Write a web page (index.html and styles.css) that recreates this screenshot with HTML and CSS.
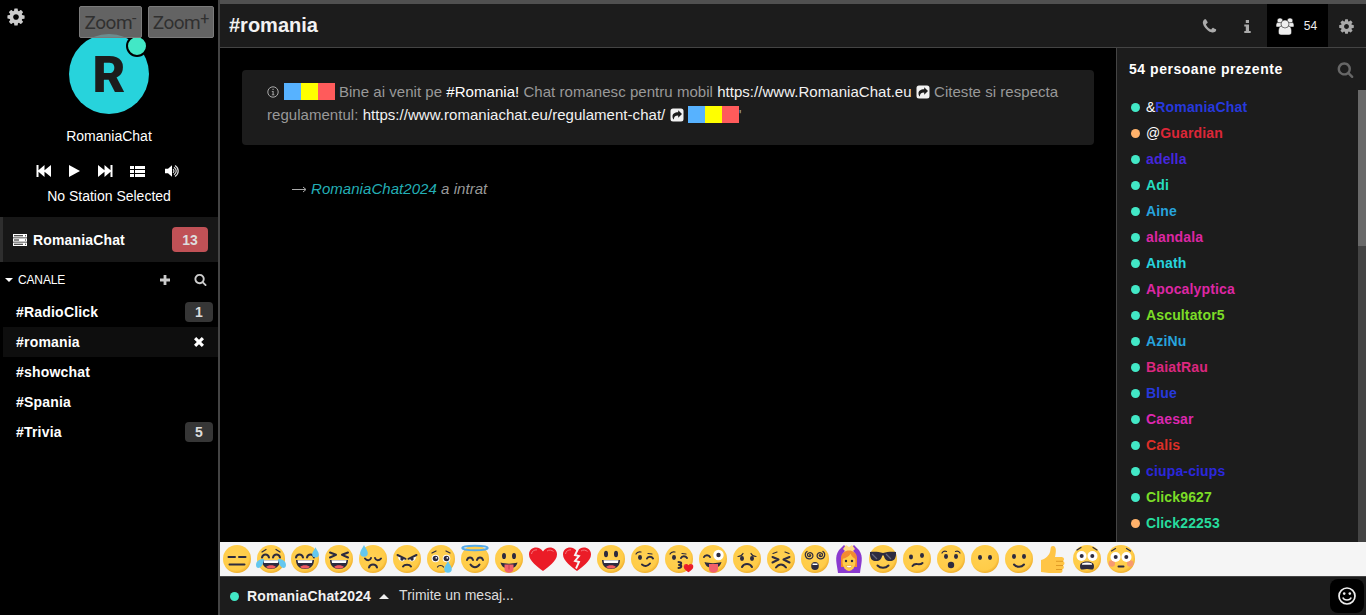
FILE: index.html
```html
<!DOCTYPE html>
<html lang="ro">
<head>
<meta charset="utf-8">
<title>#romania</title>
<link rel="stylesheet" href="styles.css">
</head>
<body>
<svg class="defs" aria-hidden="true">
  <defs>
    <radialGradient id="skin" cx="45%" cy="42%" r="58%"><stop offset="0" stop-color="#ffd153"/><stop offset=".82" stop-color="#ffcc48"/><stop offset="1" stop-color="#f0b02e"/></radialGradient>
  </defs>
  <symbol id="cog" viewBox="0 0 1792 1792"><path d="M1152 896q0-106-75-181t-181-75-181 75-75 181 75 181 181 75 181-75 75-181zm512-109v222q0 12-8 23t-20 13l-185 28q-19 54-39 91 35 50 107 138 10 12 10 25t-9 23q-27 37-99 108t-94 71q-12 0-26-9l-138-108q-44 23-91 38-16 136-29 186-7 28-36 28h-222q-14 0-24.500-8.500t-11.500-21.500l-28-184q-49-16-90-37l-141 107q-10 9-25 9-14 0-25-11-126-114-165-168-7-10-7-23 0-12 8-23 15-21 51-66.500t54-70.500q-27-50-41-99l-183-27q-13-2-21-12.500t-8-23.500v-222q0-12 8-23t19-13l186-28q14-46 39-92-40-57-107-138-10-12-10-24 0-10 9-23 26-36 98.500-107.500t94.500-71.500q13 0 26 10l138 107q44-23 91-38 16-136 29-186 7-28 36-28h222q14 0 24.500 8.500t11.500 21.500l28 184q49 16 90 37l142-107q9-9 24-9 13 0 25 10 129 119 165 170 7 8 7 22 0 12-8 23-15 21-51 66.500t-54 70.500q26 50 41 98l183 28q13 2 21 12.500t8 23.500z"/></symbol>
  <symbol id="search" viewBox="0 0 1792 1792"><path d="M1216 832q0-185-131.500-316.500t-316.500-131.500-316.500 131.500-131.500 316.500 131.500 316.500 316.500 131.500 316.500-131.500 131.500-316.500zm512 832q0 52-38 90t-90 38q-54 0-90-38l-343-342q-179 124-399 124-143 0-273.500-55.500t-225-150-150-225-55.500-273.500 55.500-273.500 150-225 225-150 273.500-55.500 273.500 55.500 225 150 150 225 55.500 273.500q0 220-124 399l343 343q37 37 37 90z"/></symbol>
  <symbol id="phone" viewBox="0 0 1792 1792"><path d="M1600 1240q0 27-10 70.500t-21 68.500q-21 50-122 106-94 51-186 51-27 0-53-3.500t-57.500-12.500-47-14.500-55.500-20.500-49-18q-98-35-175-83-127-79-264-216t-216-264q-48-77-83-175-3-9-18-49t-20.500-55.500-14.500-47-12.500-57.500-3.500-53q0-92 51-186 56-101 106-122 25-11 68.500-21t70.500-10q14 0 21 3 18 6 53 76 11 19 30 54t35 63.500 31 53.500q3 4 17.500 25t21.500 35.500 7 28.500q0 20-28.500 50t-62 55-62 53-28.500 46q0 9 5 22.500t8.500 20.500 14 24 11.500 19q76 137 174 235t235 174q2 1 19 11.500t24 14 20.500 8.500 22.500 5q18 0 46-28.500t53-62 55-62 50-28.500q14 0 28.500 7t35.500 21.500 25 17.500q25 15 53.500 31t63.500 35 54 30q70 35 76 53 3 7 3 21z"/></symbol>
  <symbol id="share" viewBox="0 0 14 14"><path fill-rule="evenodd" d="M3 .5h8a2.500 2.500 0 0 1 2.500 2.500v8A2.500 2.500 0 0 1 11 13.500H3A2.500 2.500 0 0 1 .5 11V3A2.500 2.500 0 0 1 3 .5zm5.200 1.800v2C4.500 4.300 2.400 6 2.500 8.500c0 1.300.5 2.500 1.300 3.100C4 8.800 5 7.500 8.200 7.500v2.200L12 6z"/></symbol>
  <symbol id="face" viewBox="0 0 28 28"><circle cx="14" cy="14" r="14" fill="url(#skin)"/></symbol>
  <symbol id="laugh" viewBox="0 0 28 28"><path d="M5 15h18c0 6-4 9-9 9s-9-3-9-9z" fill="#2d2b3f"/><path d="M6.500 15.300h15l-.6 2.700H7.100z" fill="#fff"/><path d="M9 22c2-2.500 8-2.500 10 0-3 2-7 2-10 0z" fill="#f15a61"/></symbol>
  <symbol id="arcs" viewBox="0 0 28 28"><path d="M5 12.500c1-4 6-4 7 0M16 12.500c1-4 6-4 7 0" class="ln"/></symbol>
  <symbol id="dots" viewBox="0 0 28 28"><ellipse cx="9" cy="11.500" rx="2" ry="2.400" fill="#2d2b3f"/><ellipse cx="19" cy="11.500" rx="2" ry="2.400" fill="#2d2b3f"/></symbol>
  <symbol id="bigeyes" viewBox="0 0 28 28"><circle cx="8.500" cy="12" r="5" fill="#fff"/><circle cx="19.500" cy="12" r="5" fill="#fff"/><circle cx="8.700" cy="12" r="2" fill="#2d2b3f"/><circle cx="19.300" cy="12" r="2" fill="#2d2b3f"/></symbol>
  <symbol id="drop" viewBox="0 0 8 12"><path d="M4 0c1 3 3.800 5 3.800 8a3.800 3.800 0 0 1-7.600 0C.2 5 3 3 4 0z" fill="#64c7ef"/></symbol>
  <symbol id="heart" viewBox="0 0 28 28"><path d="M14 26C9 22 0 16 0 9.500 0 2 10 0 14 6.500 18 0 28 2 28 9.500 28 16 19 22 14 26z" fill="#eb1c27"/><path d="M2.500 9C3 6 5 4.800 8 4.800M18 6c2-1.500 5-1 6.500.5" fill="none" stroke="#f5757c" stroke-width="1"/></symbol>
</svg>

<div class="app">
  <aside class="sidebar">
    <section class="profile">
      <svg class="profile-cog"><use href="#cog"/></svg>
      <div class="avatar">R<span class="avatar-status"></span></div>
      <div class="zoom"><button class="zoom-btn zoom-out">Zoom<sup>-</sup></button><button class="zoom-btn">Zoom<sup>+</sup></button></div>
      <div class="profile-name">RomaniaChat</div>
      <div class="player">
        <svg width="16" height="12" viewBox="0 0 16 12"><path d="M.5 0h2v5.300L8.500 0v5.300L15 0v12L8.500 6.700V12L2.500 6.700V12h-2z"/></svg>
        <svg class="play" width="11" height="12" viewBox="0 0 11 12"><path d="M0 0l11 6-11 6z"/></svg>
        <svg class="next" width="16" height="12" viewBox="0 0 16 12"><path d="M15.500 0h-2v5.300L7.500 0v5.300L1 0v12l6.500-5.300V12l6-5.300V12h2z"/></svg>
        <svg class="stations" width="15" height="11" viewBox="0 0 15 11"><path d="M0 0h4v3H0zM5 0h10v3H5zM0 4h4v3H0zM5 4h10v3H5zM0 8h4v3H0zM5 8h10v3H5z"/></svg>
        <svg class="volume" width="14" height="12" viewBox="0 0 14 12"><path d="M0 3.800h3L7 .2v11.600L3 8.200H0z"/><path d="M8 4.200c1.300 1 1.300 2.600 0 3.600M9 2.300c3 2 3 5.400 0 7.400M10 .6c4.300 2.700 4.300 8.100 0 10.800" fill="none" stroke="#ddd" stroke-width="1.200"/></svg>
      </div>
      <div class="station">No Station Selected</div>
    </section>
    <div class="network">
      <svg width="14" height="12" viewBox="0 0 14 12"><path fill-rule="evenodd" d="M0 0h14v3.400H0zM0 4.300h14v3.400H0zM0 8.600h14V12H0zM1 1.200v1h9v-1zM1 5.500v1h5v-1zM1 9.800v1h9v-1zM12 1.200v1h1v-1zM12 5.500v1h1v-1zM12 9.800v1h1v-1z"/></svg>
      <span class="network-name">RomaniaChat</span><span class="badge badge-alert">13</span>
    </div>
    <div class="channels-head">
      <span class="caret-down"></span><span class="channels-title">CANALE</span>
      <svg class="plus" width="10" height="10" viewBox="0 0 10 10"><path d="M3.600 0h2.800v3.600H10v2.800H6.400V10H3.600V6.400H0V3.600h3.600z"/></svg>
      <svg class="find" width="13" height="13"><use href="#search"/></svg>
    </div>
    <nav class="channels">
      <div class="channel"><span>#RadioClick</span><span class="badge">1</span></div>
      <div class="channel channel-active"><span>#romania</span><svg class="close" width="10" height="10" viewBox="0 0 10 10"><path d="M0 2.200L2.200 0 5 2.800 7.800 0 10 2.200 7.200 5 10 7.800 7.800 10 5 7.200 2.200 10 0 7.800 2.800 5z"/></svg></div>
      <div class="channel"><span>#showchat</span></div>
      <div class="channel"><span>#Spania</span></div>
      <div class="channel"><span>#Trivia</span><span class="badge">5</span></div>
    </nav>
  </aside>

  <main class="main">
    <header class="header">
      <h1 class="title">#romania</h1>
      <span class="tool tool-phone"><svg width="17" height="17"><use href="#phone"/></svg></span>
      <span class="tool tool-info"><svg width="7" height="13" viewBox="0 0 7 13"><path d="M1.800 0h3.200v3H1.800zM.3 4.500H5V11h1.700v2H.3v-2h1.500V6.500H.3z"/></svg></span>
      <span class="tool tool-users"><svg width="18" height="17" viewBox="0 0 18 17"><g stroke="#000" stroke-width=".5"><circle cx="4" cy="2.800" r="2.800"/><circle cx="14" cy="2.800" r="2.800"/><path d="M0 8c0-3 1-3.400 2-3.400h4V9H1.500C.5 9 0 8.800 0 8zM18 8c0-3-1-3.400-2-3.400h-4V9h4.500c1 0 1.500-.2 1.500-1z"/><path d="M2.400 14c0-4.500 1.600-6 3.400-6h6.400c1.800 0 3.400 1.500 3.400 6 0 2-1 3-2.600 3H5c-1.600 0-2.600-1-2.600-3z"/><circle cx="9" cy="6" r="4"/></g></svg><span>54</span></span>
      <span class="tool tool-cog"><svg width="17" height="17"><use href="#cog"/></svg></span>
    </header>
    <div class="body">
      <section class="messages">
        <div class="topic"><svg class="topic-info" width="12" height="12" viewBox="0 0 12 12"><circle cx="6" cy="6" r="5.200" fill="none" stroke="#aaa"/><path d="M5.500 2.700h1.100v1.200H5.500zM4.800 5h1.800v3.500h.8v.8H4.800v-.8h.8V5.800h-.8z" fill="#aaa"/></svg> <span class="flag"></span> Bine ai venit pe <b>#Romania!</b> Chat romanesc pentru mobil <a>https://www.RomaniaChat.eu <svg class="ext"><use href="#share"/></svg></a> Citeste si respecta<br>regulamentul: <a>https://www.romaniachat.eu/regulament-chat/ <svg class="ext"><use href="#share"/></svg></a> <span class="flag"></span><span class="tick">'</span></div>
        <div class="join"><svg width="15" height="8" viewBox="0 0 15 8"><path d="M0 4.500h13.500M11 2l3 2.500L11 7" fill="none" stroke="#aaa"/></svg><span class="join-nick">RomaniaChat2024</span> a intrat</div>
      </section>
      <aside class="people">
        <div class="people-head"><span>54 persoane prezente</span><svg width="17" height="17"><use href="#search"/></svg></div>
        <div class="people-body">
          <ul class="list">
            <li class="user"><i class="dot"></i><span class="mode">&amp;</span><span class="c-royal">RomaniaChat</span></li>
            <li class="user"><i class="dot away"></i><span class="mode">@</span><span class="c-crimson">Guardian</span></li>
            <li class="user"><i class="dot"></i><span class="c-violet">adella</span></li>
            <li class="user"><i class="dot"></i><span class="c-teal">Adi</span></li>
            <li class="user"><i class="dot"></i><span class="c-sky">Aine</span></li>
            <li class="user"><i class="dot"></i><span class="c-magenta">alandala</span></li>
            <li class="user"><i class="dot"></i><span class="c-cyan">Anath</span></li>
            <li class="user"><i class="dot"></i><span class="c-magenta">Apocalyptica</span></li>
            <li class="user"><i class="dot"></i><span class="c-lime">Ascultator5</span></li>
            <li class="user"><i class="dot"></i><span class="c-sky">AziNu</span></li>
            <li class="user"><i class="dot"></i><span class="c-pink">BaiatRau</span></li>
            <li class="user"><i class="dot"></i><span class="c-royal">Blue</span></li>
            <li class="user"><i class="dot"></i><span class="c-fuchsia">Caesar</span></li>
            <li class="user"><i class="dot"></i><span class="c-red">Calis</span></li>
            <li class="user"><i class="dot"></i><span class="c-indigo">ciupa-ciups</span></li>
            <li class="user"><i class="dot"></i><span class="c-lime">Click9627</span></li>
            <li class="user"><i class="dot away"></i><span class="c-mint">Click22253</span></li>
          </ul>
          <div class="track"><div class="thumb"></div></div>
        </div>
      </aside>
    </div>
    <div class="emojis">
      <svg viewBox="0 0 28 28"><use href="#face"/><path d="M5.500 12h6.500M16 12h6.500M6.500 19.500h15" class="ln"/></svg>
      <svg viewBox="0 0 28 28"><use href="#face"/><use href="#arcs"/><use href="#laugh"/><path d="M5 7l4-2.500M23 7l-4-2.500" class="ln thin"/><path d="M7 14c-4-.5-8 2-8 6 0 5 7 4 8-6zM21 14c4-.5 8 2 8 6 0 5-7 4-8-6z" fill="#64c7ef"/></svg>
      <svg viewBox="0 0 28 28"><use href="#face"/><use href="#arcs"/><use href="#laugh"/><use href="#drop" x="21" y="2" width="7" height="11"/></svg>
      <svg viewBox="0 0 28 28"><use href="#face"/><use href="#laugh"/><path d="M5 7.500l6 2.300-6 2.700M23 7.500l-6 2.300 6 2.700" class="ln"/></svg>
      <svg viewBox="0 0 28 28"><use href="#face"/><path d="M6 13.500c2 2.500 5 2.500 6-.5M16 13c1 3 4 3 6 .5M10 22.500c1-4 7-4 8 0" class="ln"/><use href="#drop" x="1" y="0" width="8" height="12"/></svg>
      <svg viewBox="0 0 28 28"><use href="#face"/><path d="M5 11l7 3c-1 4-7 3-7-3zM23 11l-7 3c1 4 7 3 7-3z" fill="#fff"/><path d="M4.500 10l8 3.800M23.500 10l-8 3.800M10 21.500c1.500-2.500 6.500-2.500 8 0" class="ln"/><circle cx="9" cy="14" r="1.700" fill="#2d2b3f"/><circle cx="19" cy="14" r="1.700" fill="#2d2b3f"/></svg>
      <svg viewBox="0 0 28 28"><use href="#face"/><circle cx="8.500" cy="13.500" r="3.800" fill="#fff"/><circle cx="19.500" cy="13.500" r="3.800" fill="#fff"/><circle cx="8.500" cy="13.500" r="2.800" fill="#2d2b3f"/><circle cx="19.500" cy="13.500" r="2.800" fill="#2d2b3f"/><circle cx="9.300" cy="12.800" r=".9" fill="#fff"/><circle cx="20.300" cy="12.800" r=".9" fill="#fff"/><path d="M5 8l4-2M23 8l-4-2M10.500 22c1-2 5-2 6 0" class="ln thin"/><use href="#drop" x="17" y="16" width="8" height="12"/></svg>
      <svg viewBox="0 0 28 28"><use href="#face"/><path d="M6 15c1-3.500 5-3.500 6 0M16 15c1-3.500 5-3.500 6 0M9.500 19.500c2 3.500 7 3.500 9 0" class="ln"/><ellipse cx="14" cy="3" rx="12.800" ry="2.300" fill="none" stroke="#55a9e8" stroke-width="2"/></svg>
      <svg viewBox="0 0 28 28"><use href="#face"/><ellipse cx="9" cy="11" rx="2" ry="3.100" fill="#2d2b3f"/><ellipse cx="19" cy="11" rx="2" ry="3.100" fill="#2d2b3f"/><path d="M5.500 17.500c5 1.500 12 1.500 17 0-1 4.500-4.500 6-8.500 6s-7.500-1.500-8.500-6z" fill="#2d2b3f"/><path d="M9.500 19.500h9V24c0 5-9 5-9 0z" fill="#f1616b"/><path d="M14 20v4.500" stroke="#c73e4c"/></svg>
      <svg viewBox="0 0 28 28"><use href="#heart"/></svg>
      <svg viewBox="0 0 28 28"><use href="#heart"/><path d="M15 4l-3 6 4 1-4 5 4 1-3 6.500" fill="none" stroke="#f5f5f5" stroke-width="1.900"/></svg>
      <svg viewBox="0 0 28 28"><use href="#face"/><ellipse cx="9" cy="9" rx="2" ry="3.200" fill="#2d2b3f"/><ellipse cx="19" cy="9" rx="2" ry="3.200" fill="#2d2b3f"/><use href="#laugh"/></svg>
      <svg viewBox="0 0 28 28"><use href="#face"/><ellipse cx="9" cy="12.500" rx="2" ry="2.400" fill="#2d2b3f"/><path d="M16 13.500c1-2.500 4.500-2.500 6 0M11 19.500c3 2.500 6 1.500 8-1" class="ln"/><path d="M5 9c1-2 3-2.500 5-2M17 8.500l4 .5" class="ln thin"/></svg>
      <svg viewBox="0 0 28 28"><use href="#face"/><ellipse cx="9" cy="12.500" rx="2" ry="2.400" fill="#2d2b3f"/><path d="M16 13c1-2.500 4.500-2.500 6 0M13.500 17c4 0 3 2.800.5 2.900 3.200 0 3 3-.5 3.100" class="ln"/><path d="M5 9c1-2 3-2.500 5-2M17 8.500l4 .5" class="ln thin"/><use href="#heart" x="18.500" y="18" width="10" height="10"/></svg>
      <svg viewBox="0 0 28 28"><use href="#face"/><path d="M5 12c1-2.500 5-2.500 6 0" class="ln"/><circle cx="19.500" cy="10" r="5.200" fill="#fff"/><circle cx="19.500" cy="10" r="2.200" fill="#2d2b3f"/><path d="M5.500 17c5 1.500 12 1.500 17 0-1 4.500-4.500 6-8.500 6s-7.500-1.500-8.500-6z" fill="#2d2b3f"/><path d="M10 19h9v5c0 5-9 5-9 0z" fill="#f1616b"/></svg>
      <svg viewBox="0 0 28 28"><use href="#face"/><use href="#dots" y="2"/><path d="M9 22c2-4 8-4 10 0" class="ln"/><path d="M5 11.500c2 0 4-1 5-3M23 11.500c-2 0-4-1-5-3" class="ln thin"/></svg>
      <svg viewBox="0 0 28 28"><use href="#face"/><path d="M5.500 12l6 2.500-6 3M22.500 12l-6 2.500 6 3M9 22.500c3-4 7-4 10 0" class="ln"/><path d="M6 8.500l4-1.500M22 8.500L18 7" class="ln thin"/></svg>
      <svg viewBox="0 0 28 28"><use href="#face"/><path d="M8.500 10c1-1 2 1 .2 1.500-2.500.5-3.200-3-.4-3.700 4-.8 5.200 5 .8 6-4.500.8-6.500-5-3-7.300M19.500 10c-1-1-2 1-.2 1.500 2.500.5 3.200-3 .4-3.700-4-.8-5.200 5-.8 6 4.500.8 6.500-5 3-7.300" class="ln thin"/><ellipse cx="14" cy="21" rx="3.800" ry="4" fill="#2d2b3f"/><path d="M11.500 18.500h5v1.500h-5z" fill="#fff"/></svg>
      <svg viewBox="0 0 28 28"><path d="M3 28c-1-9-4-16 1-23l5-5 3 3-5 7v11h14V10l-5-7 3-3 5 5c5 7 2 14 1 23z" fill="#8a39cf"/><path d="M5 26h18v2H5z" fill="#8a39cf"/><path d="M8 4l3-4 3 2 3-2 3 4-3 3h-6z" fill="#ffdd85"/><path d="M6 13c0-10 16-10 16 0v9H6z" fill="#f38a31"/><ellipse cx="14" cy="17" rx="6.500" ry="9" fill="#ffcc48"/><path d="M7.500 14c3-1 7-2.500 8-5.500 1 3 3 4.500 5.500 5.500-2-9-11.500-9-13.500 0z" fill="#f38a31"/><circle cx="11" cy="16" r="1.200" fill="#2d2b3f"/><circle cx="17" cy="16" r="1.200" fill="#2d2b3f"/><path d="M11 20.500h6c-1 3-5 3-6 0z" fill="#fff" stroke="#d78b2d" stroke-width=".5"/></svg>
      <svg viewBox="0 0 28 28"><use href="#face"/><path d="M1 7c5-.6 9 0 13 1 4-1 8-1.600 13-1v3c-.6 4.500-2.500 6-6 6-4 0-5.500-2-6.200-5.500h-1.600C12.500 14 11 16 7 16c-3.500 0-5.400-1.500-6-6z" fill="#2d2b3f"/><path d="M3 9l5 5M17 9l5 5" stroke="#66667a" stroke-width="1.200"/><path d="M8.500 20.500c3 3 8 3 11 0" class="ln"/></svg>
      <svg viewBox="0 0 28 28"><use href="#face"/><ellipse cx="8" cy="12" rx="2" ry="2.400" fill="#2d2b3f"/><ellipse cx="19" cy="10.500" rx="2" ry="2.400" fill="#2d2b3f"/><path d="M9.500 21c2-3 4-2 6-1.700 2 .2 3-.3 4-1.300" class="ln"/></svg>
      <svg viewBox="0 0 28 28"><use href="#face"/><use href="#dots"/><path d="M5 8c1-1.500 3-2 4.500-1.500M23 8c-1-1.500-3-2-4.500-1.500" class="ln thin"/><circle cx="14" cy="20" r="3.200" fill="#2d2b3f"/></svg>
      <svg viewBox="0 0 28 28"><use href="#face"/><use href="#dots" y="1"/></svg>
      <svg viewBox="0 0 28 28"><use href="#face"/><use href="#dots"/><path d="M9 19.500c2.500 3 7.500 3 10 0" class="ln"/></svg>
      <svg viewBox="0 0 28 28"><path d="M2 15c5-1 8-5 9-8 1-3 0-6 3-6 4 0 3 7 2 11h6c3 0 4 2.500 2 4 2 1 2 3.500 0 4.500 1.500 1.300 1 3.500-.7 4 .7 2-.3 3.500-2.300 3.500H10c-3 0-5-1-8-1z" fill="#ffc546"/><path d="M17 16.300h7M17 20.500h7M17 24.500h6" stroke="#e09a25"/></svg>
      <svg viewBox="0 0 28 28"><use href="#face"/><use href="#bigeyes" y="-1"/><path d="M4 5l4-2.500M24 5l-4-2.500" class="ln thin"/><path d="M7 21c0-3 3-4.500 7-4.500s7 1.500 7 4.500-1 4-3 3.500c-2.500-.8-5.500-.8-8 0-2 .5-3-.5-3-3.500z" fill="#2d2b3f"/><path d="M9 18.500c3-1.500 7-1.500 10 0v1.200H9z" fill="#fff"/></svg>
      <svg viewBox="0 0 28 28"><use href="#face"/><circle cx="4.800" cy="18.500" r="3.200" fill="#f79a70"/><circle cx="23.200" cy="18.500" r="3.200" fill="#f79a70"/><use href="#bigeyes"/><path d="M4.500 6l4-2.500M23.500 6l-4-2.500" class="ln thin"/><path d="M11.500 21.500h5" class="ln"/></svg>
    </div>
    <footer class="composer">
      <i class="dot"></i><span class="me">RomaniaChat2024</span><span class="caret-up"></span><span class="placeholder">Trimite un mesaj...</span>
      <span class="smile"><svg width="18" height="18" viewBox="0 0 18 18"><circle cx="9" cy="9" r="8" fill="none" stroke="#eee" stroke-width="1.700"/><circle cx="6.200" cy="6.600" r="1.300" fill="#eee"/><circle cx="11.800" cy="6.600" r="1.300" fill="#eee"/><path d="M4.800 10.500c1.200 3.400 7.200 3.400 8.400 0" fill="none" stroke="#eee" stroke-width="1.500"/></svg></span>
    </footer>
  </main>
</div>
</body>
</html>
```

FILE: styles.css
```css
* { box-sizing: border-box; }
body { margin: 0; background: #000; color: #fff; font: 14px/20px "Liberation Sans", Arial, sans-serif; overflow: hidden; }
svg { fill: currentColor; flex: none; display: block; }
.defs { position: absolute; width: 0; height: 0; }
.app { display: flex; width: 1366px; height: 615px; }

/* Sidebar */
.sidebar { width: 220px; flex: none; border-right: 2px solid #444; display: flex; flex-direction: column; }
.profile { position: relative; height: 217px; padding-top: 34px; display: flex; flex-direction: column; align-items: center; }
.profile-cog { position: absolute; left: 6px; top: 7px; width: 20px; height: 20px; color: #ccc; }
.avatar { position: relative; width: 80px; height: 80px; border-radius: 50%; background: #27d3dc; color: #1c1c1c; text-align: center; font: 900 50.500px/81px Roboto, sans-serif; }
.avatar-status { position: absolute; right: 1px; top: 1px; width: 22px; height: 22px; border-radius: 50%; background: #42e8c6; border: 2px solid #000; }
.zoom { position: absolute; left: 79px; top: 6px; display: flex; gap: 6px; }
.zoom-btn { width: 66px; height: 32px; padding: 0; border: 1px solid #7b7b7b; border-radius: 2px; background: rgba(124, 124, 124, .8); color: #303030; font: 19px/32px Roboto, sans-serif; letter-spacing: -.5px; white-space: nowrap; }
.zoom-out { width: 63px; }
.zoom-btn sup { font-size: 16px; line-height: 0; vertical-align: 5px; letter-spacing: 0; }
.profile-name { margin-top: 12px; }
.player { display: flex; align-items: center; height: 12px; margin: 19px 0 0 -3px; width: 143px; }
.play { margin-left: 17px; }
.next { margin-left: 17px; }
.stations { margin-left: 17px; }
.volume { margin-left: 20px; }
.station { margin-top: 9px; }
.network { height: 45px; background: #171717; border-left: 3px solid #2e2e2e; display: flex; align-items: center; padding: 0 10px; font-weight: 700; }
.network-name { margin-left: 6px; flex: 1; letter-spacing: .15px; }
.badge { width: 28px; height: 20px; border-radius: 4px; background: #363636; color: #ddd; text-align: center; font-weight: 700; }
.badge-alert { width: 36px; height: 25px; line-height: 26px; background: #c05156; }
.channels-head { height: 35px; display: flex; align-items: center; padding: 0 11px 0 5px; font-size: 12px; color: #fff; }
.caret-down { border: 4px solid transparent; border-top-color: #fff; border-bottom: 0; }
.channels-title { margin-left: 5px; flex: 1; letter-spacing: -.15px; }
.channels-head svg { color: #ccc; }
.plus { margin-right: 24px; }
.channel { height: 30px; margin-left: 3px; padding: 0 5px 0 13px; display: flex; align-items: center; justify-content: space-between; font-weight: 700; letter-spacing: .2px; }
.channel-active { background: #0e0e0e; }
.close { margin-right: 9px; }

/* Main column */
.main { flex: 1; min-width: 0; display: flex; flex-direction: column; border-top: 4px solid #505050; }
.header { height: 44px; flex: none; background: #1c1c1c; border-bottom: 1px solid #444; display: flex; align-items: stretch; padding-left: 9px; }
.title { flex: 1; margin: 0; font-size: 20px; line-height: 42px; color: #f2f2f2; }
.tool { display: flex; align-items: center; justify-content: center; color: #aaa; padding: 1px 2px 0 0; }
.tool-phone { width: 38px; }
.tool-info { width: 38px; }
.tool-users { width: 61px; background: #000; color: #eee; gap: 10px; font-size: 12px; }
.tool-cog { width: 38px; }
.body { flex: 1; min-height: 0; display: flex; }
.messages { flex: 1; padding: 22px 22px 0; }
.topic { height: 75px; padding: 10px 0 0 25px; background: #1c1c1c; border-radius: 4px; font-size: 15px; line-height: 23px; letter-spacing: .04px; color: #999; white-space: nowrap; }
.topic b { font-weight: 400; color: #fff; }
.topic a { color: #f2f2f2; }
.topic svg { display: inline-block; vertical-align: -2px; }
.topic .topic-info { vertical-align: -1px; margin-right: .5px; }
.ext { width: 14px; height: 14px; }
.flag { display: inline-block; width: 51px; height: 17px; vertical-align: -3px; background: linear-gradient(90deg, #57b2ff 33.33%, #ff0 33.33% 66.66%, #ff5b5b 66.66%); }
.join { display: flex; align-items: center; padding: 34px 0 0 50px; font-size: 15px; font-style: italic; letter-spacing: .05px; color: #999; white-space: pre; }
.join-nick { margin-left: 4px; color: #23aeb5; }

/* People panel */
.people { width: 250px; border-left: 1px solid #444; background: #1c1c1c; display: flex; flex-direction: column; }
.people-head { height: 42px; flex: none; display: flex; align-items: center; justify-content: space-between; padding: 0 12px; font-weight: 700; letter-spacing: .53px; }
.people-head svg { color: #666; }
.people-body { flex: 1; min-height: 0; display: flex; overflow: hidden; }
.list { list-style: none; flex: 1; margin: 0; padding: 4px 0 0 14px; }
.user { height: 26px; display: flex; align-items: center; font-weight: 700; letter-spacing: .15px; }
.dot { width: 9px; height: 9px; margin-right: 6px; border-radius: 50%; background: #42e8c6; }
.away { background: #ffb26b; }
.mode { font-weight: 400; letter-spacing: 0; }
.track { width: 8px; background: #444; }
.thumb { height: 156px; background: #696969; }
.c-royal { color: #2739dc; } .c-crimson { color: #dc2738; } .c-violet { color: #4527dc; }
.c-teal { color: #27dcc0; } .c-sky { color: #27a3dc; } .c-magenta { color: #dc27a3; }
.c-cyan { color: #27d3dc; } .c-lime { color: #7bdc27; } .c-pink { color: #dc277f; }
.c-fuchsia { color: #dc27af; } .c-red { color: #dc2f27; } .c-indigo { color: #2b27dc; } .c-mint { color: #27dc9e; }

/* Emoji bar and composer */
.emojis { height: 34px; flex: none; padding: 3px; background: #f5f5f5; display: flex; gap: 6px; }
.emojis svg { width: 28px; height: 28px; overflow: visible; }
.ln { fill: none; stroke: #2d2b3f; stroke-width: 2; stroke-linecap: round; stroke-linejoin: round; }
.thin { stroke-width: 1.200; }
.composer { height: 39px; flex: none; background: #1c1c1c; border-top: 1px solid #444; display: flex; align-items: center; padding: 0 2px 0 10px; }
.composer .dot { margin-right: 8px; }
.me { font-weight: 700; letter-spacing: .18px; color: #f2f2f2; }
.caret-up { margin: 0 10px 0 8px; border: 5px solid transparent; border-bottom-color: #eee; border-top: 0; }
.placeholder { flex: 1; padding-bottom: 2px; color: #ddd; }
.smile { width: 34px; height: 34px; border-radius: 8px; background: #000; display: flex; align-items: center; justify-content: center; }
```
